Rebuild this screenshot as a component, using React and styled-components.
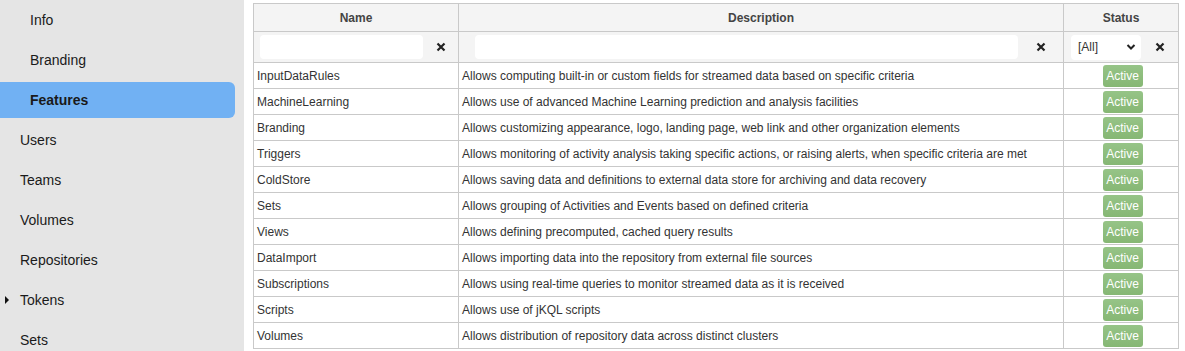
import React from "react";
import styled, { createGlobalStyle } from "styled-components";

const Global = createGlobalStyle`
  html, body { margin: 0; padding: 0; background: #fff; }
  body { font-family: "Liberation Sans", Arial, sans-serif; overflow: hidden; }
`;

const Layout = styled.div`
  display: flex;
  width: 1185px;
  height: 351px;
  overflow: hidden;
`;

const Sidebar = styled.nav`
  width: 244px;
  flex-shrink: 0;
  background: #e5e5e5;
  display: flex;
  flex-direction: column;
`;

const NavItem = styled.div`
  position: relative;
  height: 40px;
  flex-shrink: 0;
  display: flex;
  align-items: center;
  padding-left: ${(p) => (p.$sub ? 30 : 20)}px;
  font-size: 14px;
  color: #1a1a1a;
  font-weight: ${(p) => (p.$active ? 700 : 400)};
  &::before {
    content: "";
    display: ${(p) => (p.$active ? "block" : "none")};
    position: absolute;
    left: 0;
    right: 9px;
    top: 2px;
    bottom: 2px;
    background: #71b1f3;
    border-radius: 0 6px 6px 0;
    z-index: 0;
  }
`;

const NavLabel = styled.span`
  position: relative;
  z-index: 1;
`;

const Caret = styled.span`
  position: absolute;
  left: 5px;
  top: 50%;
  margin-top: -4px;
  width: 0;
  height: 0;
  border-top: 4px solid transparent;
  border-bottom: 4px solid transparent;
  border-left: 4px solid #111;
`;

const Main = styled.main`
  flex: 1;
  padding: 3px 0 0 9px;
`;

const Table = styled.table`
  border-collapse: collapse;
  width: 925px;
  table-layout: fixed;
  font-size: 12px;
  color: #333;
`;

const Th = styled.th`
  background: #f4f4f4;
  border: 1px solid #c9c9c9;
  height: 27px;
  padding: 0;
  font-weight: 700;
  color: #444;
  text-align: center;
  vertical-align: middle;
`;

const FilterCell = styled.td`
  background: #f4f4f4;
  border: 1px solid #c9c9c9;
  height: 30px;
  padding: 0 0 0 ${(p) => p.$pl}px;
`;

const FilterWrap = styled.div`
  display: flex;
  align-items: center;
`;

const FilterInput = styled.div`
  height: 24px;
  width: ${(p) => p.$w}px;
  background: #fff;
  border-radius: 4px;
  flex-shrink: 0;
`;

const SelectBox = styled.div`
  height: 25px;
  width: 70px;
  background: #fff;
  border-radius: 4px;
  display: flex;
  align-items: center;
  justify-content: space-between;
  padding: 0 5px 0 7px;
  box-sizing: border-box;
  font-size: 12px;
  color: #333;
  flex-shrink: 0;
`;

const ClearBtn = styled.div`
  flex: 1;
  display: flex;
  justify-content: center;
  align-items: center;
`;

const Td = styled.td`
  border: 1px solid #c9c9c9;
  height: 25px;
  padding: 0 0 0 3px;
  vertical-align: middle;
  white-space: nowrap;
  overflow: hidden;
  text-align: ${(p) => p.$align || "left"};
`;

const Badge = styled.span`
  display: inline-block;
  width: 40px;
  height: 22px;
  line-height: 22px;
  box-sizing: border-box;
  border-radius: 3px;
  background: linear-gradient(#96c487, #86b774);
  color: #fff;
  font-size: 12px;
  text-align: center;
  vertical-align: middle;
`;

const XIcon = () => (
  <svg width="10" height="10" viewBox="0 0 10 10">
    <path d="M1.5 1.5 L8.5 8.5 M8.5 1.5 L1.5 8.5" stroke="#222" strokeWidth="2.2" strokeLinecap="butt" />
  </svg>
);

const Chevron = () => (
  <svg width="10" height="8" viewBox="0 0 10 8">
    <path d="M1.5 2 L5 5.5 L8.5 2" stroke="#222" strokeWidth="2" fill="none" />
  </svg>
);

const nav = [
  { label: "Info", sub: true },
  { label: "Branding", sub: true },
  { label: "Features", sub: true, active: true },
  { label: "Users" },
  { label: "Teams" },
  { label: "Volumes" },
  { label: "Repositories" },
  { label: "Tokens", caret: true },
  { label: "Sets" },
];

const rows = [
  ["InputDataRules", "Allows computing built-in or custom fields for streamed data based on specific criteria"],
  ["MachineLearning", "Allows use of advanced Machine Learning prediction and analysis facilities"],
  ["Branding", "Allows customizing appearance, logo, landing page, web link and other organization elements"],
  ["Triggers", "Allows monitoring of activity analysis taking specific actions, or raising alerts, when specific criteria are met"],
  ["ColdStore", "Allows saving data and definitions to external data store for archiving and data recovery"],
  ["Sets", "Allows grouping of Activities and Events based on defined criteria"],
  ["Views", "Allows defining precomputed, cached query results"],
  ["DataImport", "Allows importing data into the repository from external file sources"],
  ["Subscriptions", "Allows using real-time queries to monitor streamed data as it is received"],
  ["Scripts", "Allows use of jKQL scripts"],
  ["Volumes", "Allows distribution of repository data across distinct clusters"],
];

export default function App() {
  return (
    <>
      <Global />
      <Layout>
        <Sidebar>
          {nav.map((n) => (
            <NavItem key={n.label} $sub={n.sub} $active={n.active}>
              {n.caret && <Caret />}
              <NavLabel>{n.label}</NavLabel>
            </NavItem>
          ))}
        </Sidebar>
        <Main>
          <Table>
            <colgroup>
              <col style={{ width: 205 }} />
              <col style={{ width: 605 }} />
              <col style={{ width: 115 }} />
            </colgroup>
            <thead>
              <tr>
                <Th>Name</Th>
                <Th>Description</Th>
                <Th>Status</Th>
              </tr>
              <tr>
                <FilterCell $pl={6}>
                  <FilterWrap>
                    <FilterInput $w={163} />
                    <ClearBtn><XIcon /></ClearBtn>
                  </FilterWrap>
                </FilterCell>
                <FilterCell $pl={16}>
                  <FilterWrap>
                    <FilterInput $w={543} />
                    <ClearBtn><XIcon /></ClearBtn>
                  </FilterWrap>
                </FilterCell>
                <FilterCell $pl={7}>
                  <FilterWrap>
                    <SelectBox>
                      <span>[All]</span>
                      <Chevron />
                    </SelectBox>
                    <ClearBtn><XIcon /></ClearBtn>
                  </FilterWrap>
                </FilterCell>
              </tr>
            </thead>
            <tbody>
              {rows.map(([name, desc]) => (
                <tr key={name}>
                  <Td>{name}</Td>
                  <Td>{desc}</Td>
                  <Td $align="center">
                    <Badge>Active</Badge>
                  </Td>
                </tr>
              ))}
            </tbody>
          </Table>
        </Main>
      </Layout>
    </>
  );
}
